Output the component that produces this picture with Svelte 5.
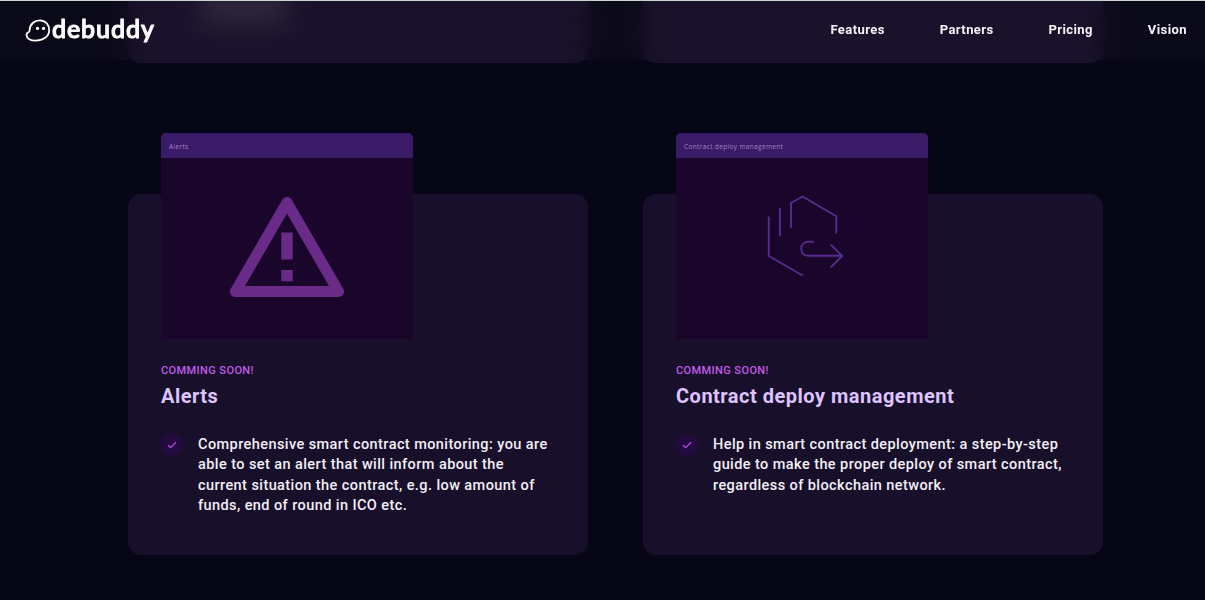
<script lang="ts">
  const links = ['Features', 'Partners', 'Pricing', 'Vision'];

  const features = [
    {
      title: 'Alerts',
      icon: 'alert',
      lines: [
        'Comprehensive smart contract monitoring: you are',
        'able to set an alert that will inform about the',
        'current situation the contract, e.g. low amount of',
        'funds, end of round in ICO etc.'
      ]
    },
    {
      title: 'Contract deploy management',
      icon: 'deploy',
      lines: [
        'Help in smart contract deployment: a step-by-step',
        'guide to make the proper deploy of smart contract,',
        'regardless of blockchain network.'
      ]
    }
  ];
</script>

<div class="page">
  <header>
    <a class="logo" href="#top" aria-label="debuddy">
      <svg width="140" height="40" viewBox="-0.5 -4.8 140 40">
        <path
          d="M5.1 14.3 C5.4 8.4 10 4.5 15.2 4.5 C20.8 4.5 24.7 8.9 24.7 14.2 C24.7 20.8 18.5 24.9 10.8 24.9 C6.2 24.9 2.2 22.7 2 19.4 C1.9 17.2 3.2 16.6 4.3 16.2 C5 15.9 5.1 15.2 5.1 14.3 Z"
          fill="none"
          stroke="#fff"
          stroke-width="1.8"
        />
        <circle cx="13" cy="12.6" r="1.6" fill="#fff" />
        <circle cx="19" cy="12.6" r="1.6" fill="#fff" />
        <text class="wordmark" x="27.4" y="22" textLength="102">debuddy</text>
      </svg>
    </a>
    <nav>
      {#each links as link}
        <a href="#{link.toLowerCase()}">{link}</a>
      {/each}
    </nav>
  </header>

  <main>
    <div class="row previous">
      <div class="tail"><div class="line"></div></div>
      <div class="tail"></div>
    </div>

    <div class="row">
      {#each features as feature}
        <article class="card">
          <div class="preview">
            <div class="preview-bar">{feature.title}</div>
            <div class="preview-body">
              {#if feature.icon === 'alert'}
                <svg class="alert" width="116" height="102" viewBox="0 0 116 102">
                  <path
                    d="M58 6.5 L109.5 95.5 L6.5 95.5 Z"
                    fill="none"
                    stroke="#6a2a88"
                    stroke-width="11"
                    stroke-linejoin="round"
                  />
                  <path d="M52.3 36.5h11.4v27H52.3zM52.3 74h11.4v11.3H52.3z" fill="#6a2a88" />
                </svg>
              {:else}
                <svg class="deploy" width="80" height="84" viewBox="0 0 80 84">
                  <path
                    d="M3.8 21.4 V61 L37.6 80.5 M14.9 13 V41.2 M26 32.8 V8 L37.6 1.5 L71.3 21.2 V38.6 M48.8 46.8 H43.5 C39.2 46.8 36.2 49.4 36.2 53.8 C36.2 58.3 39.2 60.8 43.5 60.8 H77 M65.8 49.6 L77.2 60.9 L65.8 72.3"
                    fill="none"
                    stroke="#592a8f"
                    stroke-width="1.9"
                  />
                </svg>
              {/if}
            </div>
          </div>
          <p class="soon">COMMING SOON!</p>
          <h2>{feature.title}</h2>
          <div class="point">
            <span class="check">
              <svg width="10" height="8" viewBox="0 0 10 8">
                <path d="M1 4.2 L3.6 6.6 L9 1.2" fill="none" stroke="#b44be0" stroke-width="1.3" />
              </svg>
            </span>
            <p>
              {#each feature.lines as line}
                <span class="text-line">{line}</span>
              {/each}
            </p>
          </div>
        </article>
      {/each}
    </div>
  </main>
</div>

<style>
  :global(body) {
    background: #060616;
  }

  .page {
    position: relative;
    box-sizing: border-box;
    height: 600px;
    overflow: hidden;
    border-top: 1px solid #ccd6d0;
    background: #060616;
    font-family: Roboto, 'Liberation Sans', sans-serif;
    color: #f3eff6;
  }

  /* sticky bar lying over the scrolled content */
  header {
    position: absolute;
    inset: 0 0 auto 0;
    z-index: 2;
    box-sizing: border-box;
    height: 59px;
    padding: 0 18px 0 24px;
    display: flex;
    align-items: center;
    justify-content: space-between;
    background: rgba(46, 40, 56, 0.13);
    backdrop-filter: blur(12px);
  }

  .logo {
    display: flex;
  }

  .wordmark {
    font: 500 25px Lato, sans-serif;
    fill: #fff;
    stroke: #fff;
    stroke-width: 1.1px;
    stroke-linejoin: round;
  }

  nav {
    display: flex;
    gap: 54.8px;
    margin-top: -2px;
  }

  nav a {
    color: #f6f3f8;
    font-size: 13px;
    font-weight: 700;
    letter-spacing: 0.43px;
    text-decoration: none;
  }

  .row {
    display: grid;
    grid-template-columns: 460px 460px;
    column-gap: 55px;
    padding-left: 128px;
  }

  .previous {
    margin-bottom: 131px;
  }

  .tail {
    height: 62px;
    border-radius: 0 0 13px 13px;
    background: #180f2a;
    overflow: hidden;
  }

  .line {
    width: 86px;
    height: 24px;
    margin-left: 73px;
    background: #312940;
    filter: blur(6px);
  }

  .card {
    box-sizing: border-box;
    height: 360.5px;
    padding: 0 33px;
    border-radius: 13px;
    background: #180f2a;
  }

  .preview {
    width: 252px;
    margin-top: -61px;
    border-radius: 5px 5px 0 0;
    overflow: hidden;
    background: #1a062a;
  }

  .preview-bar {
    height: 25px;
    padding: 1px 8px 0;
    box-sizing: border-box;
    background: #391b67;
    color: #a584c4;
    font: 6.5px/25px 'Open Sans', sans-serif;
    letter-spacing: 0.35px;
  }

  .preview-body {
    height: 181px;
    display: flex;
    align-items: center;
    justify-content: center;
  }

  .alert {
    margin-top: -4px;
  }

  .deploy {
    margin: -24px 0 0 5px;
  }

  .soon {
    margin: 25px 0 0;
    color: #c25ce8;
    font-size: 11px;
    font-weight: 500;
    line-height: 14px;
    letter-spacing: 0.4px;
  }

  h2 {
    margin: 4px 0 0;
    color: #dec4ff;
    font-size: 20px;
    font-weight: 700;
    line-height: 28px;
    letter-spacing: 0.5px;
  }

  .point {
    display: flex;
    gap: 15px;
    margin-top: 25px;
  }

  .check {
    flex: none;
    display: flex;
    align-items: center;
    justify-content: center;
    width: 22px;
    height: 22px;
    margin-top: -1px;
    border-radius: 50%;
    background: #240b3f;
  }

  .point p {
    margin: 0;
    font-size: 14.5px;
    font-weight: 500;
    line-height: 20.3px;
    letter-spacing: 0.42px;
  }

  .text-line {
    display: block;
    white-space: nowrap;
  }
</style>
